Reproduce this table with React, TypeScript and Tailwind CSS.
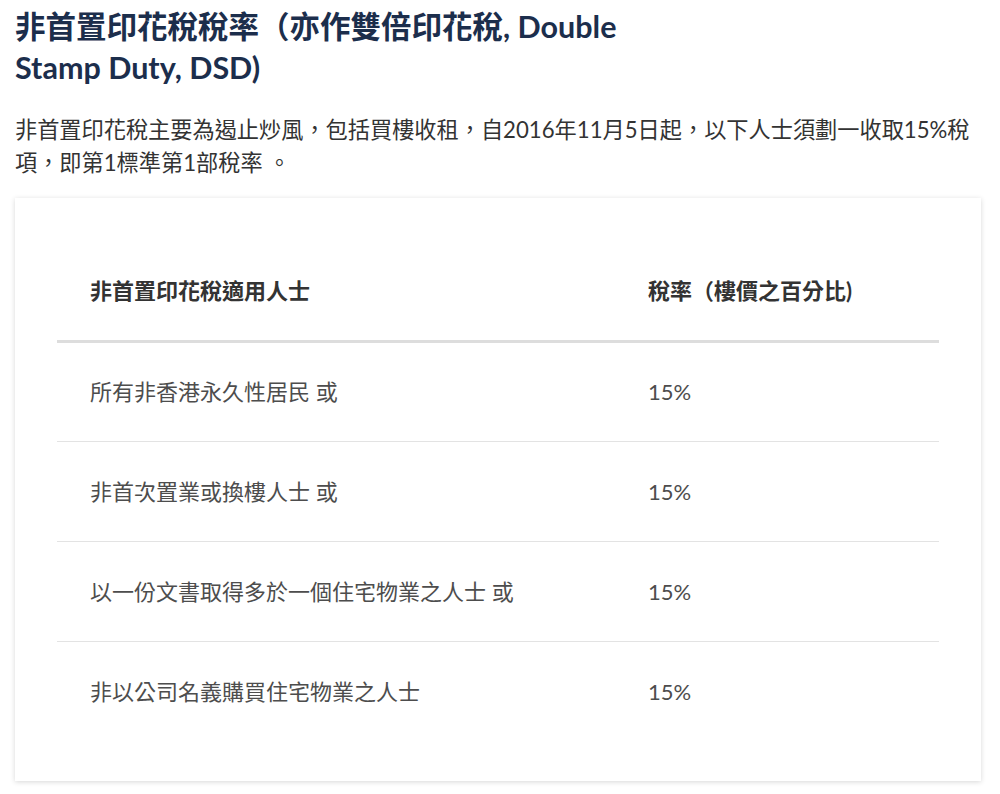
const rows = [
  { who: "所有非香港永久性居民 或", rate: "15%" },
  { who: "非首次置業或換樓人士 或", rate: "15%" },
  { who: "以一份文書取得多於一個住宅物業之人士 或", rate: "15%" },
  { who: "非以公司名義購買住宅物業之人士", rate: "15%" },
];

const font = "font-['Lato','Noto_Sans_CJK_TC',sans-serif]";

export default function App() {
  return (
    <div className={`${font} bg-white min-h-[794px] pl-[15px] pr-[19px] pt-[6px]`}>
      <h2 className="max-w-[640px] text-[30.5px] leading-[41px] font-bold text-[#1c2e4c]">
        非首置印花稅稅率（亦作雙倍印花稅, Double Stamp Duty, DSD)
      </h2>
      <p className="mt-[25px] text-[22.2px] leading-[33px] text-[#333333]">
        非首置印花稅主要為遏止炒風，包括買樓收租，自2016年11月5日起，以下人士須劃一收取15%稅項，即第1標準第1部稅率 。
      </p>
      <div className="mt-[19px] bg-white px-[42px] pt-[43px] pb-[40px] shadow-[0_1px_5px_rgba(0,0,0,0.16)]">
        <table className="w-full border-collapse text-[22px]">
          <thead>
            <tr className="border-b-[3px] border-[#dddddd]">
              <th className="h-[100px] w-[558px] pl-[33px] text-left font-bold text-[#333333]">
                非首置印花稅適用人士
              </th>
              <th className="h-[100px] pl-[33px] text-left font-bold text-[#333333]">
                稅率（樓價之百分比)
              </th>
            </tr>
          </thead>
          <tbody>
            {rows.map((r, i) => (
              <tr
                key={i}
                className={i < rows.length - 1 ? "border-b border-[#e3e3e3]" : ""}
              >
                <td className="h-[100px] pl-[33px] text-[#4d4d4d]">{r.who}</td>
                <td className="h-[100px] pl-[33px] text-[#4d4d4d]">{r.rate}</td>
              </tr>
            ))}
          </tbody>
        </table>
      </div>
    </div>
  );
}
